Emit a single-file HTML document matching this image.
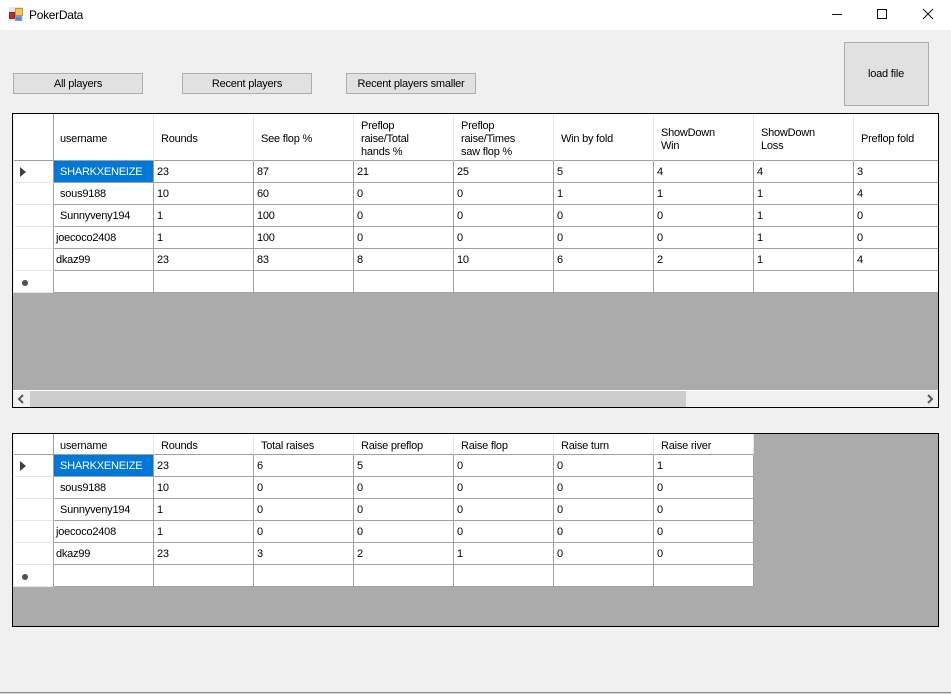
<!DOCTYPE html>
<html><head><meta charset="utf-8"><title>PokerData</title>
<style>
html,body{margin:0;padding:0;width:951px;height:694px;overflow:hidden;background:#f0f0f0;font:11px/13px "Liberation Sans",sans-serif;color:#000;letter-spacing:-.22px}
.a{position:absolute}
.title{left:0;top:0;width:951px;height:30px;background:#fff}
.btn{position:absolute;box-sizing:border-box;border:1px solid #adadad;background:#e1e1e1;text-align:center;line-height:21px;height:21px;width:130px;top:73px}
.grid{position:absolute;box-sizing:border-box;border:1px solid #000;background:#ababab;overflow:hidden}
.r{position:absolute;left:1px;height:22px;white-space:nowrap}
.r>*{position:absolute;top:0;height:100%;box-sizing:border-box;width:100px;border-right:1px solid #a0a0a0;border-bottom:1px solid #a0a0a0;background:#fff;padding:4px 0 0 3px;line-height:14px}
.r>*:nth-child(1){left:0;width:40px;border-right:1px solid #a0a0a0;border-bottom:1px solid #e6e6e6;padding:0}
.r>*:nth-child(2){left:40px}
.r>*:nth-child(3){left:140px}
.r>*:nth-child(4){left:240px}
.r>*:nth-child(5){left:340px}
.r>*:nth-child(6){left:440px}
.r>*:nth-child(7){left:540px}
.r>*:nth-child(8){left:640px}
.r>*:nth-child(9){left:740px}
.r>*:nth-child(10){left:840px}
.h>*{border-right-color:#e6e6e6;border-bottom-color:#a0a0a0;padding:5px 0 0 7px;display:flex;align-items:center;line-height:13px}
.h>*:nth-child(1){border-bottom-color:#a0a0a0}
.h b{font-weight:400}
.u{padding-left:6px!important}
.s{background:#0078d7!important;color:#fff;padding-left:6px!important}
.arr{position:absolute;left:6px;top:6px;width:0;height:0;border-left:6px solid #404040;border-top:5px solid transparent;border-bottom:5px solid transparent}
.dot{position:absolute;left:8px;top:9px;width:6px;height:6px;border-radius:50%;background:#505050}
.edge{position:absolute;left:0;top:0;width:1px;background:#f0f0f0}
</style></head>
<body>
<div class="a title"></div>
<svg class="a" style="left:9px;top:7px" width="15" height="15" viewBox="0 0 15 15">
<rect x="0" y="0" width="14" height="14" fill="#e4e6ea"/>
<rect x="6.5" y="1.5" width="7" height="7" fill="#f6c846" stroke="#b8954a"/>
<rect x="0.5" y="5.5" width="5" height="6" fill="#c8281e" stroke="#8a2a22"/>
<rect x="6.5" y="9.5" width="6" height="4" fill="#4a8ae0" stroke="#7aa0d0"/>
</svg>
<div class="a" style="left:29px;top:8px;font-size:12px;line-height:14px;letter-spacing:-.3px">PokerData</div>
<svg class="a" style="left:820px;top:0" width="131" height="30" viewBox="0 0 131 30" fill="none" stroke="#111" stroke-width="1">
<path d="M12 14.5H22"/>
<rect x="57.5" y="9.5" width="9" height="9"/>
<path d="M103 9L113 19M113 9L103 19"/>
</svg>

<div class="btn" style="left:13px">All players</div>
<div class="btn" style="left:182px">Recent players</div>
<div class="btn" style="left:346px">Recent players smaller</div>
<div class="btn" style="left:844px;top:42px;width:85px;height:64px;line-height:63px;text-indent:-1px">load file</div>

<div class="grid" style="left:12px;top:113px;width:927px;height:295px">
 <div class="edge" style="height:179px"></div>
 <div class="r h" style="top:0;height:47px"><i></i><b style="padding-left:6px">username</b><b>Rounds</b><b>See flop %</b><b>Preflop<br>raise/Total<br>hands %</b><b>Preflop<br>raise/Times<br>saw flop %</b><b>Win by fold</b><b>ShowDown<br>Win</b><b>ShowDown<br>Loss</b><b>Preflop fold</b></div>
 <div class="r" style="top:47px"><i><span class="arr"></span></i><span class="s">SHARKXENEIZE</span><span>23</span><span>87</span><span>21</span><span>25</span><span>5</span><span>4</span><span>4</span><span>3</span></div>
 <div class="r" style="top:69px"><i></i><span class="u">sous9188</span><span>10</span><span>60</span><span>0</span><span>0</span><span>1</span><span>1</span><span>1</span><span>4</span></div>
 <div class="r" style="top:91px"><i></i><span class="u">Sunnyveny194</span><span>1</span><span>100</span><span>0</span><span>0</span><span>0</span><span>0</span><span>1</span><span>0</span></div>
 <div class="r" style="top:113px"><i></i><span style="padding-left:2px">joecoco2408</span><span>1</span><span>100</span><span>0</span><span>0</span><span>0</span><span>0</span><span>1</span><span>0</span></div>
 <div class="r" style="top:135px"><i></i><span style="padding-left:2px">dkaz99</span><span>23</span><span>83</span><span>8</span><span>10</span><span>6</span><span>2</span><span>1</span><span>4</span></div>
 <div class="r" style="top:157px"><i><span class="dot"></span></i><span></span><span></span><span></span><span></span><span></span><span></span><span></span><span></span><span></span></div>
 <div class="a" style="left:0;top:276px;width:925px;height:1px;background:#fff"></div>
 <div class="a" style="left:0;top:277px;width:925px;height:16px;background:#f0f0f0"></div>
 <div class="a" style="left:17px;top:277px;width:656px;height:16px;background:#cdcdcd"></div>
 <svg class="a" style="left:0;top:277px" width="925" height="16" viewBox="0 0 925 16" fill="none" stroke="#5a5a5a" stroke-width="2">
  <path d="M10 4L6 8L10 12"/>
  <path d="M915 4L919 8L915 12"/>
 </svg>
</div>

<div class="grid" style="left:12px;top:433px;width:927px;height:194px">
 <div class="edge" style="height:153px"></div>
 <div class="r h" style="top:0;height:21px"><i></i><b style="padding-left:6px">username</b><b>Rounds</b><b>Total raises</b><b>Raise preflop</b><b>Raise flop</b><b>Raise turn</b><b>Raise river</b></div>
 <div class="r" style="top:21px"><i><span class="arr"></span></i><span class="s">SHARKXENEIZE</span><span>23</span><span>6</span><span>5</span><span>0</span><span>0</span><span>1</span></div>
 <div class="r" style="top:43px"><i></i><span class="u">sous9188</span><span>10</span><span>0</span><span>0</span><span>0</span><span>0</span><span>0</span></div>
 <div class="r" style="top:65px"><i></i><span class="u">Sunnyveny194</span><span>1</span><span>0</span><span>0</span><span>0</span><span>0</span><span>0</span></div>
 <div class="r" style="top:87px"><i></i><span style="padding-left:2px">joecoco2408</span><span>1</span><span>0</span><span>0</span><span>0</span><span>0</span><span>0</span></div>
 <div class="r" style="top:109px"><i></i><span style="padding-left:2px">dkaz99</span><span>23</span><span>3</span><span>2</span><span>1</span><span>0</span><span>0</span></div>
 <div class="r" style="top:131px"><i><span class="dot"></span></i><span></span><span></span><span></span><span></span><span></span><span></span><span></span></div>
</div>

<div class="a" style="left:0;top:692px;width:951px;height:1px;background:#8a8a8a"></div>
<div class="a" style="left:0;top:693px;width:951px;height:1px;background:#d8d8d8"></div>
</body></html>
